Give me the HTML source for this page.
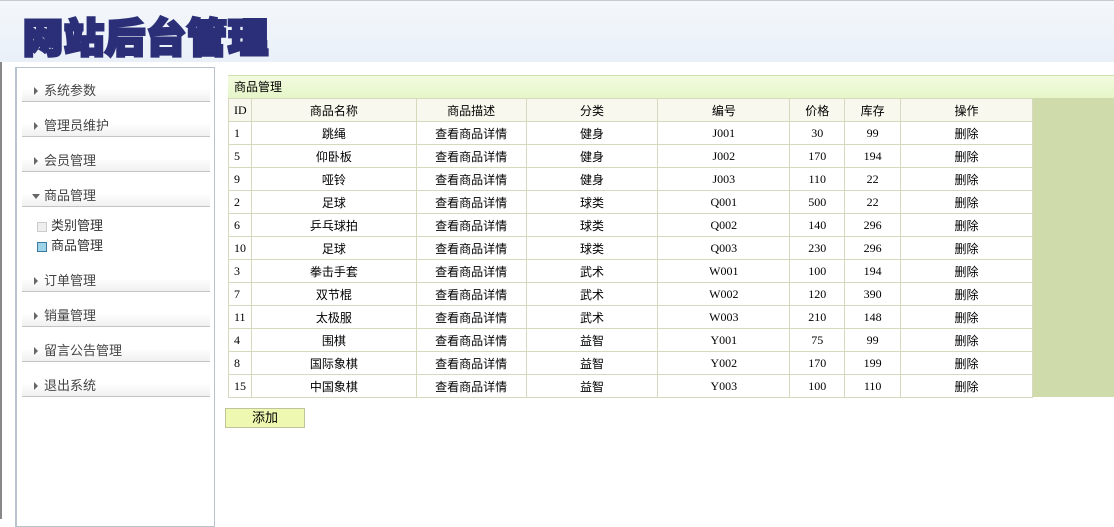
<!DOCTYPE html>
<html><head><meta charset="utf-8"><style>
*{margin:0;padding:0;box-sizing:border-box}
body{width:1114px;height:519px;overflow:hidden;background:#fff;font-family:"Liberation Serif","Noto Sans CJK SC",serif;font-size:12px;color:#000;position:relative}
.top{position:absolute;left:0;top:0;width:1114px;height:62px;background:linear-gradient(#f4f7fb,#e9f0f8);border-top:1px solid #c8ccd2}
.logo{position:absolute;left:23px;top:6px;font-family:"WenQuanYi Zen Hei","Noto Sans CJK SC",sans-serif;font-weight:900;font-size:40px;letter-spacing:1px;color:#2a2f78;-webkit-text-stroke:3px #2a2f78;line-height:56px}
.lline{position:absolute;left:0;top:62px;width:2px;height:457px;background:#888}
.panel{position:absolute;left:15px;top:67px;width:200px;height:460px;border:1px solid #b8c2cc;border-left:2px solid #b8c4d0;background:#fff}
.mi{position:absolute;left:5px;width:188px;height:22px;border-bottom:1px solid #c4c4c4;background:linear-gradient(to bottom,#fff 40%,#f0f0f0);font-family:"Liberation Sans","Noto Sans CJK SC",sans-serif;font-size:13px;color:#444;padding-left:22px;line-height:22px}
.mi:before{content:"";position:absolute;left:12px;top:7px;border-left:4px solid #666;border-top:4px solid transparent;border-bottom:4px solid transparent}
.mi.open:before{left:10px;top:9px;border-top:5px solid #666;border-left:4px solid transparent;border-right:4px solid transparent;border-bottom:0}
.sub{position:absolute;left:20px;font-family:"Liberation Sans","Noto Sans CJK SC",sans-serif;font-size:13px;color:#333;padding-left:14px;line-height:18px}
.sub:before{content:"";position:absolute;left:0;top:5px;width:8px;height:8px;border:1px solid #ccc;background:#eee}
.sub.b:before{border-color:#3a7aa0;background:#9fd4e8}
.title{position:absolute;left:228px;top:75px;width:886px;height:23px;background:linear-gradient(#f3fbe0,#e6f6c8);border-top:1px solid #cfe0b0;padding-left:6px;line-height:22px;font-family:"Liberation Sans","Noto Sans CJK SC",sans-serif;font-size:12px}
table{position:absolute;left:228px;top:98px;border-collapse:collapse;width:805px}
td{border:1px solid #d6d9bd;height:23px;text-align:center;font-size:12px;padding:0}
tr.h td{background:#f8f8ee;font-family:"Liberation Sans","Noto Sans CJK SC",sans-serif}
tr.h td.id{font-family:"Liberation Serif",serif}
td.id{text-align:left;padding-left:5px}
.green{position:absolute;left:1033px;top:98px;width:81px;height:299px;background:#d0dbab}
.add{position:absolute;left:225px;top:408px;width:80px;height:20px;background:#eff8b0;border:1px solid #c0c49a;text-align:center;line-height:18px;font-family:"Liberation Sans","Noto Sans CJK SC",sans-serif;font-size:13px}
</style></head><body>
<div class="top"><div class="logo">网站后台管理</div></div>
<div class="lline"></div>
<div class="panel">
<div class="mi" style="top:12px">系统参数</div>
<div class="mi" style="top:47px">管理员维护</div>
<div class="mi" style="top:82px">会员管理</div>
<div class="mi open" style="top:117px">商品管理</div>
<div class="sub" style="top:149px">类别管理</div>
<div class="sub b" style="top:169px">商品管理</div>
<div class="mi" style="top:202px">订单管理</div>
<div class="mi" style="top:237px">销量管理</div>
<div class="mi" style="top:272px">留言公告管理</div>
<div class="mi" style="top:307px">退出系统</div>
</div>
<div class="title">商品管理</div>
<div class="green"></div>
<table>
<colgroup><col style="width:23px"><col style="width:165px"><col style="width:110px"><col style="width:132px"><col style="width:132px"><col style="width:55px"><col style="width:56px"><col style="width:132px"></colgroup>
<tr class="h"><td class="id">ID</td><td>商品名称</td><td>商品描述</td><td>分类</td><td>编号</td><td>价格</td><td>库存</td><td>操作</td></tr>
<tr><td class="id">1</td><td>跳绳</td><td>查看商品详情</td><td>健身</td><td>J001</td><td>30</td><td>99</td><td>删除</td></tr>
<tr><td class="id">5</td><td>仰卧板</td><td>查看商品详情</td><td>健身</td><td>J002</td><td>170</td><td>194</td><td>删除</td></tr>
<tr><td class="id">9</td><td>哑铃</td><td>查看商品详情</td><td>健身</td><td>J003</td><td>110</td><td>22</td><td>删除</td></tr>
<tr><td class="id">2</td><td>足球</td><td>查看商品详情</td><td>球类</td><td>Q001</td><td>500</td><td>22</td><td>删除</td></tr>
<tr><td class="id">6</td><td>乒乓球拍</td><td>查看商品详情</td><td>球类</td><td>Q002</td><td>140</td><td>296</td><td>删除</td></tr>
<tr><td class="id">10</td><td>足球</td><td>查看商品详情</td><td>球类</td><td>Q003</td><td>230</td><td>296</td><td>删除</td></tr>
<tr><td class="id">3</td><td>拳击手套</td><td>查看商品详情</td><td>武术</td><td>W001</td><td>100</td><td>194</td><td>删除</td></tr>
<tr><td class="id">7</td><td>双节棍</td><td>查看商品详情</td><td>武术</td><td>W002</td><td>120</td><td>390</td><td>删除</td></tr>
<tr><td class="id">11</td><td>太极服</td><td>查看商品详情</td><td>武术</td><td>W003</td><td>210</td><td>148</td><td>删除</td></tr>
<tr><td class="id">4</td><td>围棋</td><td>查看商品详情</td><td>益智</td><td>Y001</td><td>75</td><td>99</td><td>删除</td></tr>
<tr><td class="id">8</td><td>国际象棋</td><td>查看商品详情</td><td>益智</td><td>Y002</td><td>170</td><td>199</td><td>删除</td></tr>
<tr><td class="id">15</td><td>中国象棋</td><td>查看商品详情</td><td>益智</td><td>Y003</td><td>100</td><td>110</td><td>删除</td></tr>
</table>
<div class="add">添加</div>
</body></html>
